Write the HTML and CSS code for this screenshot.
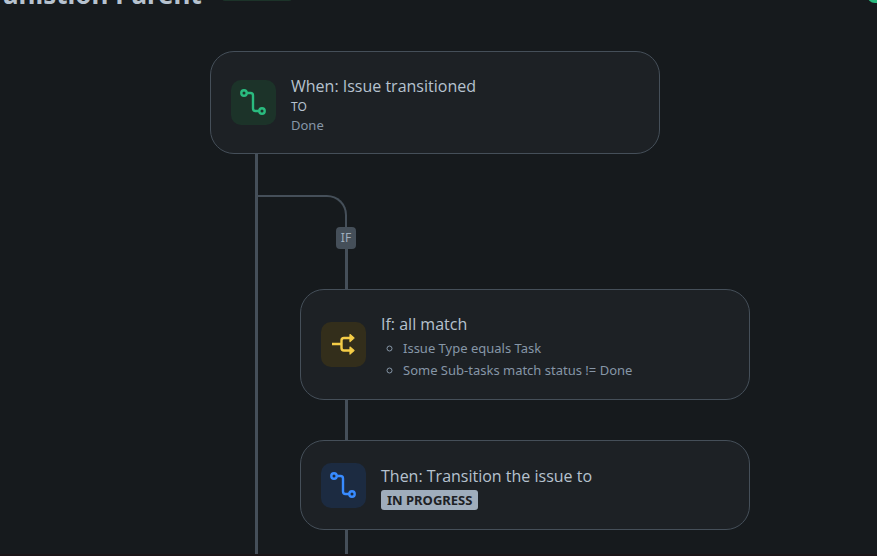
FILE: index.html
```
<!DOCTYPE html>
<html lang="en">
<head>
    <meta charset="UTF-8">
    <meta name="viewport" content="width=device-width, initial-scale=1.0">
    <title>Automation rule</title>
    <link rel="stylesheet" href="styles.css">
</head>
<body>
    <header class="rule-header">
        <h1 class="rule-name">anistion Parent</h1>
        <span class="rule-status"></span>
        <span class="rule-toggle"></span>
    </header>

    <main class="rule">
        <section class="card">
            <div class="icon icon-green">
                <svg viewBox="0 0 45 45" fill="none" stroke="currentColor" stroke-width="2.4">
                    <circle cx="13" cy="13" r="2.7"/>
                    <circle cx="31" cy="31" r="2.7"/>
                    <path d="M16 13h3.500q2.500 0 2.500 2.500v13q0 2.500 2.500 2.500h3.500"/>
                </svg>
            </div>
            <div class="card-text">
                <h2>When: Issue transitioned</h2>
                <p class="label">TO</p>
                <p class="value">Done</p>
            </div>
        </section>

        <div class="children">
            <div class="elbow"></div>
            <span class="badge">IF</span>
            <div class="line"></div>

            <section class="card">
                <div class="icon icon-yellow">
                    <svg viewBox="0 0 45 45" fill="none" stroke="currentColor" stroke-width="2.4">
                        <path d="M11 22h9.500M29 16h-6q-2.500 0-2.500 2.500v7.500q0 2.500 2.500 2.500h6"/>
                        <path d="M29 12.500l4 3.500-4 3.500zM29 25l4 3.500-4 3.500z" fill="currentColor" stroke-width="1.2" stroke-linejoin="round"/>
                    </svg>
                </div>
                <div class="card-text">
                    <h2>If: all match</h2>
                    <ul class="conditions">
                        <li>Issue Type equals Task</li>
                        <li>Some Sub-tasks match status != Done</li>
                    </ul>
                </div>
            </section>

            <div class="line"></div>

            <section class="card card-small">
                <div class="icon icon-blue">
                    <svg viewBox="0 0 45 45" fill="none" stroke="currentColor" stroke-width="2.4">
                        <circle cx="13" cy="13" r="2.7"/>
                        <circle cx="31" cy="31" r="2.7"/>
                        <path d="M16 13h3.500q2.500 0 2.500 2.500v13q0 2.500 2.500 2.500h3.500"/>
                    </svg>
                </div>
                <div class="card-text">
                    <h2>Then: Transition the issue to</h2>
                    <span class="lozenge">IN PROGRESS</span>
                </div>
            </section>

            <div class="line line-end"></div>
        </div>
    </main>
</body>
</html>
```

FILE: styles.css
```
* {
    box-sizing: border-box;
}
body {
    margin: 0;
    background: #161a1d;
    color: #b6c2cf;
    font-family: "Segoe UI", "Noto Sans", sans-serif;
    font-size: 13px;
    min-height: 100vh;
    overflow: hidden;
    border-bottom: 2px solid #1a1517;
}
h1, h2, p, ul {
    margin: 0;
    padding: 0;
}
/* header is scrolled mostly out of view */
.rule-header {
    display: flex;
    align-items: flex-end;
    margin-top: -32px;
    height: 40px;
    padding-left: 3px;
}
.rule-name {
    font-size: 26px;
    line-height: 32px;
    font-weight: 700;
    margin-bottom: -2px;
}
.rule-status {
    width: 70px;
    height: 20px;
    margin: 0 0 7px 20px;
    border-radius: 3px;
    background: #1c3329;
}
.rule-toggle {
    width: 32px;
    height: 16px;
    margin: 0 -22px 5px auto;
    border-radius: 8px;
    background: #2abb7f;
}
.rule {
    padding: 43px 0 0 210px;
}
.card {
    display: flex;
    align-items: center;
    gap: 15px;
    width: 450px;
    max-width: 100%;
    padding: 18px 20px;
    background: #1d2125;
    border: 1px solid #454f59;
    border-radius: 24px;
}
.card-text {
    padding-top: 4px;
}
.icon {
    flex: none;
    width: 45px;
    height: 45px;
    border-radius: 10px;
}
.icon svg {
    display: block;
}
.icon-green {
    background: #1c3329;
    color: #2abb7f;
}
.icon-yellow {
    background: #332e1b;
    color: #f5cd47;
}
.icon-blue {
    background: #1c2b41;
    color: #388bff;
}
.card h2 {
    font-family: "Segoe UI", "Open Sans", sans-serif;
    font-size: 16px;
    line-height: 24px;
    font-weight: 400;
}
.label {
    font-size: 12px;
    line-height: 17px;
}
.value {
    line-height: 20px;
    color: #8696a7;
}
.conditions {
    list-style: circle;
    margin-top: 1px;
    padding-left: 22px;
    line-height: 22px;
    color: #8696a7;
}
.children {
    margin-left: 45px;
    border-left: 3px solid #454f59;
    padding-top: 41px;
}
.children .card {
    margin-left: 42px;
}
.card.card-small {
    padding: 19px 20px;
}
.elbow {
    width: 89px;
    height: 32px;
    border: solid #454f59;
    border-width: 2px 2px 0 0;
    border-top-right-radius: 20px;
}
.badge {
    display: block;
    width: 20px;
    margin-left: 78px;
    border-radius: 4px;
    background: #454f59;
    color: #9fadbc;
    font-size: 12px;
    line-height: 22px;
    text-align: center;
}
.line {
    width: 3px;
    height: 40px;
    margin-left: 87px;
    background: #454f59;
}
.line-end {
    height: 24px;
}
.lozenge {
    display: block;
    width: fit-content;
    margin-top: 2px;
    padding: 0 6px;
    border-radius: 3px;
    background: #9fadbc;
    color: #1d2125;
    font-size: 13px;
    line-height: 20px;
    font-weight: 700;
}
```
